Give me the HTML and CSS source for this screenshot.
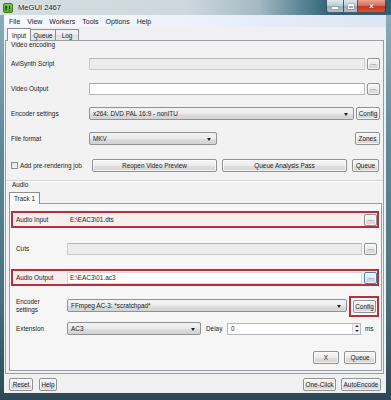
FILE: index.html
```html
<!DOCTYPE html>
<html>
<head>
<meta charset="utf-8">
<link rel="stylesheet" href="styles.css">
</head>
<body>
<div class="window">
  <div class="titlebar">
    <svg class="appicon" width="10" height="10" viewBox="0 0 10 10">
      <rect x="0.5" y="0.5" width="9" height="9" rx="1.5" fill="#62b534" stroke="#3d7a1e"/>
      <rect x="1.5" y="1.5" width="7" height="3" fill="#8fd05a"/>
      <path d="M3 2.5v5M2 4h2.5M6.5 2.5v3.5M6.5 7v0.8" stroke="#1d2a10" stroke-width="1.1" fill="none"/>
    </svg>
    <span class="title">MeGUI 2467</span>
    <div class="cbtns">
      <div class="cb min"><span class="minbar"></span></div>
      <div class="cb max"><span class="maxbox"></span></div>
      <div class="cb close">x</div>
    </div>
  </div>
  <div class="frame">
    <div class="client">
      <div class="menubar">
        <span>File</span><span>View</span><span>Workers</span><span>Tools</span><span>Options</span><span>Help</span>
      </div>
      <div class="tabstrip">
        <div class="tab sel w-input">Input</div>
        <div class="tab w-queue">Queue</div>
        <div class="tab w-log">Log</div>
      </div>
      <div class="tabpage">
        <div class="video">
          <div class="caption">Video encoding</div>
          <div class="vrow first">
            <span class="vlabel">AviSynth Script</span>
            <span class="tb ro"></span>
            <span class="btn dots">...</span>
          </div>
          <div class="vrow">
            <span class="vlabel">Video Output</span>
            <span class="tb"></span>
            <span class="btn dots">...</span>
          </div>
          <div class="vrow">
            <span class="vlabel">Encoder settings</span>
            <span class="combo grow">x264: DVD PAL 16:9 - nonITU<span class="arrow"></span></span>
            <span class="btn w-config">Config</span>
          </div>
          <div class="vrow">
            <span class="vlabel">File format</span>
            <span class="combo w-fmt">MKV<span class="arrow"></span></span>
            <span class="spacer"></span>
            <span class="btn w-zones">Zones</span>
          </div>
          <div class="vrow pre">
            <span class="chklabel"><span class="chk"></span>Add pre-rendering job</span>
            <span class="btn w-wide">Reopen Video Preview</span>
            <span class="btn w-wide">Queue Analysis Pass</span>
            <span class="btn w-vqueue">Queue</span>
          </div>
        </div>
        <div class="audio">
          <div class="caption acap">Audio</div>
          <div class="subtabs">
            <div class="tab sel w-track">Track 1</div>
          </div>
          <div class="trackpage">
            <div class="arow red r-input">
              <span class="alabel">Audio Input</span>
              <span class="tb flat">E:\EAC3\01.dts</span>
              <span class="btn dots">...</span>
            </div>
            <div class="arow r-cuts">
              <span class="alabel">Cuts</span>
              <span class="tb ro cutsbox"></span>
              <span class="btn dots">...</span>
            </div>
            <div class="arow red r-output">
              <span class="alabel">Audio Output</span>
              <span class="tb white">E:\EAC3\01.ac3</span>
              <span class="btn dots focus">...</span>
            </div>
            <div class="arow r-enc">
              <span class="alabel two">Encoder<br>settings</span>
              <span class="combo grow enccombo">FFmpeg AC-3: *scratchpad*<span class="arrow"></span></span>
              <span class="redwrap"><span class="btn w-aconfig">Config</span></span>
            </div>
            <div class="arow r-ext">
              <span class="alabel">Extension</span>
              <span class="combo w-ext">AC3<span class="arrow"></span></span>
              <span class="delay">Delay</span>
              <span class="num">0<span class="spin"><span class="up"></span><span class="down"></span></span></span>
              <span class="ms">ms</span>
            </div>
            <div class="actrow">
              <span class="btn w-x">X</span>
              <span class="btn w-aqueue">Queue</span>
            </div>
          </div>
        </div>
      </div>
      <div class="bottombar">
        <span class="btn w-reset">Reset</span>
        <span class="btn w-help">Help</span>
        <span class="spacer"></span>
        <span class="btn w-oneclick">One-Click</span>
        <span class="btn w-auto">AutoEncode</span>
      </div>
    </div>
  </div>
</div>
</body>
</html>
```
FILE: styles.css
```css
* { box-sizing: border-box; margin: 0; padding: 0; }
body {
  margin: 0;
  width: 391px;
  height: 400px;
  overflow: hidden;
  font-family: "Liberation Sans", Arial, sans-serif;
  font-size: 6.4px;
  color: #1b1b1b;
  background: #3a5e6e;
}
.window {
  width: 391px;
  height: 400px;
  display: flex;
  flex-direction: column;
  background: linear-gradient(to bottom, #8fb0bf 0%, #5e8a9c 35%, #46707f 75%, #2c4856 100%);
}
.titlebar {
  height: 15px;
  display: flex;
  align-items: flex-start;
  padding-left: 3px;
  background: linear-gradient(to right, #d4dde2 0%, #cdd7dd 48%, #a5bac4 66%, #5a8597 77%, #2f6073 85%, #2f6073 100%);
}
.appicon { margin-top: 3px; flex: none; }
.title {
  margin-left: 5px;
  margin-top: 4px;
  font-size: 7.6px;
  line-height: 8px;
  color: #111;
  text-shadow: 0 0 3px #fff, 0 0 2px #fff;
}
.cbtns {
  display: flex;
  margin-left: auto;
  margin-right: 5px;
  height: 13px;
}
.cb {
  height: 13px;
  border: 1px solid rgba(30, 50, 60, 0.75);
  border-top: none;
  display: flex;
  align-items: center;
  justify-content: center;
}
.cb.min {
  width: 17px;
  border-radius: 0 0 0 3px;
  background: linear-gradient(to bottom, #dfe8ec 0%, #b9cbd3 50%, #98b0bb 51%, #a9c0ca 100%);
  border-right: none;
}
.cb.max {
  width: 15px;
  background: linear-gradient(to bottom, #dfe8ec 0%, #b9cbd3 50%, #98b0bb 51%, #a9c0ca 100%);
}
.cb.close {
  width: 28px;
  border-left: none;
  border-radius: 0 0 3px 0;
  background: linear-gradient(to bottom, #eaa394 0%, #d7705c 45%, #c1371f 55%, #d45a3c 100%);
  color: #fff;
  font-family: "DejaVu Sans", sans-serif;
  font-weight: bold;
  font-size: 7px;
  line-height: 7px;
  text-shadow: 0 0 1px #600;
}
.minbar { width: 6px; height: 2px; background: #fff; margin-top: 4px; box-shadow: 0 0 1px #333; }
.maxbox { width: 6px; height: 5px; border: 1px solid #fff; border-top-width: 2px; box-shadow: 0 0 1px #333; }

.frame {
  flex: 1;
  display: flex;
  padding: 0 5px 7px 4px;
}
.client {
  flex: 1;
  display: flex;
  flex-direction: column;
  background: #f0f0f0;
}
.menubar {
  height: 12px;
  display: flex;
  align-items: center;
  gap: 7px;
  padding-left: 5px;
  font-size: 7px;
  background: linear-gradient(to right, #f6f8fb 0%, #eef2f9 45%, #dce5f4 100%);
}
.tabstrip {
  height: 13px;
  display: flex;
  align-items: flex-end;
  padding-left: 3px;
  position: relative;
  z-index: 1;
}
.tab {
  height: 11px;
  border: 1px solid #8c9096;
  border-bottom: none;
  display: flex;
  align-items: center;
  justify-content: center;
  background: linear-gradient(to bottom, #f4f4f4 0%, #ebebeb 50%, #dedede 51%, #e6e6e6 100%);
  margin-left: -1px;
  padding-top: 1px;
}
.tab:first-child { margin-left: 0; }
.tab.sel {
  height: 13px;
  margin-bottom: -1px;
  background: #fcfcfc;
  position: relative;
  z-index: 2;
  padding-top: 0;
}
.w-input { width: 24px; }
.w-queue { width: 26px; }
.w-log { width: 24px; }
.w-track { width: 31px; height: 12px !important; }

.tabpage {
  height: 334px;
  margin: 0 2px 0 1px;
  border: 1px solid #9a9da3;
  background: #f2f2f2;
  display: flex;
  flex-direction: column;
}
.video {
  padding: 0 3px 0 5px;
}
.caption {
  height: 8px;
  line-height: 8px;
}
.vrow {
  height: 13px;
  display: flex;
  align-items: center;
  margin-top: 12px;
}
.vrow.first { margin-top: 8px; }
.vrow.pre { height: 14px; margin-top: 13px; }
.vlabel { width: 78px; flex: none; }
.tb {
  flex: 1;
  height: 12px;
  margin-right: 2px;
  border: 1px solid #b5b8bf;
  border-top-color: #a6a9b0;
  background: #fff;
  display: flex;
  align-items: center;
  padding-left: 2px;
}
.tb.ro {
  background: #ececec;
  border-color: #c9cbcf;
  border-top-color: #b3b6bb;
}
.btn {
  height: 13px;
  flex: none;
  border: 1px solid #8f9192;
  border-radius: 2px;
  background: linear-gradient(to bottom, #f6f6f6 0%, #ececec 50%, #dedede 51%, #d6d6d6 100%);
  display: flex;
  align-items: center;
  justify-content: center;
  white-space: nowrap;
  box-shadow: inset 0 0 0 1px rgba(255, 255, 255, 0.7);
}
.btn.dots {
  width: 13px;
  height: 12px;
  font-size: 6px;
  line-height: 6px;
  padding-bottom: 1px;
}
.btn.focus {
  border-color: #4e7fa6;
  background: linear-gradient(to bottom, #eef6fb 0%, #dceaf4 50%, #c6dcec 51%, #bcd6ea 100%);
}
.combo {
  height: 13px;
  border: 1px solid #8f9192;
  border-radius: 2px;
  background: linear-gradient(to bottom, #f3f3f3 0%, #ebebeb 50%, #dddddd 51%, #d3d3d3 100%);
  display: flex;
  align-items: center;
  padding-left: 3px;
  position: relative;
  white-space: nowrap;
}
.combo.grow { flex: 1; margin-right: 2px; }
.arrow {
  position: absolute;
  right: 5px;
  top: 5px;
  width: 0;
  height: 0;
  border-left: 2.5px solid transparent;
  border-right: 2.5px solid transparent;
  border-top: 3px solid #222;
}
.w-config { width: 24px; }
.w-fmt { width: 128px; }
.spacer { flex: 1; }
.w-zones { width: 25px; }
.chklabel {
  width: 81px;
  flex: none;
  display: flex;
  align-items: center;
  white-space: nowrap;
}
.chk {
  width: 7px;
  height: 7px;
  border: 1px solid #8e8f8f;
  background: linear-gradient(to bottom right, #dcdcdc, #fbfbfb);
  margin-right: 2px;
  flex: none;
}
.w-wide { width: 125px; margin-right: 5px; }
.w-vqueue { width: 27px; }

.audio {
  flex: 1;
  margin-top: 8px;
  border-top: 1px solid #d2d2d2;
  box-shadow: inset 0 1px 0 #ffffff;
  padding: 0 1px 3px 3px;
  display: flex;
  flex-direction: column;
}
.acap { padding-left: 3px; }
.subtabs {
  margin-top: 3px;
  display: flex;
  position: relative;
  z-index: 1;
}
.trackpage {
  height: 168px;
  border: 1px solid #9a9da3;
  background: #f6f6f6;
  display: flex;
  flex-direction: column;
}
.arow {
  height: 17px;
  margin: 0 2px 0 1px;
  border: 2px solid transparent;
  padding-left: 3px;
  display: flex;
  align-items: center;
}
.arow.red {
  border-color: #b3303d;
  background: #f8edef;
}
.r-input { margin-top: 7px; }
.r-cuts { margin-top: 12px; }
.r-output { margin-top: 12px; }
.r-enc { margin-top: 10px; height: 21px; align-items: flex-start; }
.r-ext { margin-top: 3px; }
.alabel { width: 51px; flex: none; white-space: nowrap; }
.alabel.two { line-height: 8px; }
.tb.flat {
  background: transparent;
  border-color: transparent;
}
.tb.white { background: #fff; border-color: #e2d3d6; }
.cutsbox { margin-top: 0; }
.enccombo { margin-top: 1px; }
.redwrap {
  border: 2px solid #b3303d;
  padding: 2px 1px 2px 2px;
  margin-top: -2px;
  margin-right: -2px;
  flex: none;
}
.w-aconfig { width: 23px; }
.w-ext { width: 134px; }
.delay { margin-left: 5px; width: 21px; flex: none; }
.num {
  width: 134px;
  height: 12px;
  border: 1px solid #b5b8bf;
  background: #fff;
  position: relative;
  padding-left: 3px;
  display: flex;
  align-items: center;
  flex: none;
}
.spin {
  position: absolute;
  right: 0;
  top: 0;
  bottom: 0;
  width: 8px;
  display: flex;
  flex-direction: column;
  border-left: 1px solid #d8d8d8;
  background: #f2f2f2;
}
.spin .up, .spin .down {
  flex: 1;
  display: flex;
  align-items: center;
  justify-content: center;
}
.spin .up::after {
  content: "";
  border-left: 2px solid transparent;
  border-right: 2px solid transparent;
  border-bottom: 2px solid #333;
}
.spin .down::after {
  content: "";
  border-left: 2px solid transparent;
  border-right: 2px solid transparent;
  border-top: 2px solid #333;
}
.ms { margin-left: 4px; }
.actrow {
  display: flex;
  justify-content: flex-end;
  margin: 14px 5px 0 0;
}
.w-x { width: 26px; margin-right: 5px; }
.w-aqueue { width: 32px; }

.bottombar {
  height: 19px;
  display: flex;
  align-items: flex-start;
  padding: 4px 5px 0 5px;
}
.w-reset { width: 24px; }
.w-help { width: 18px; margin-left: 6px; }
.w-oneclick { width: 33px; margin-right: 5px; }
.w-auto { width: 40px; }
```
